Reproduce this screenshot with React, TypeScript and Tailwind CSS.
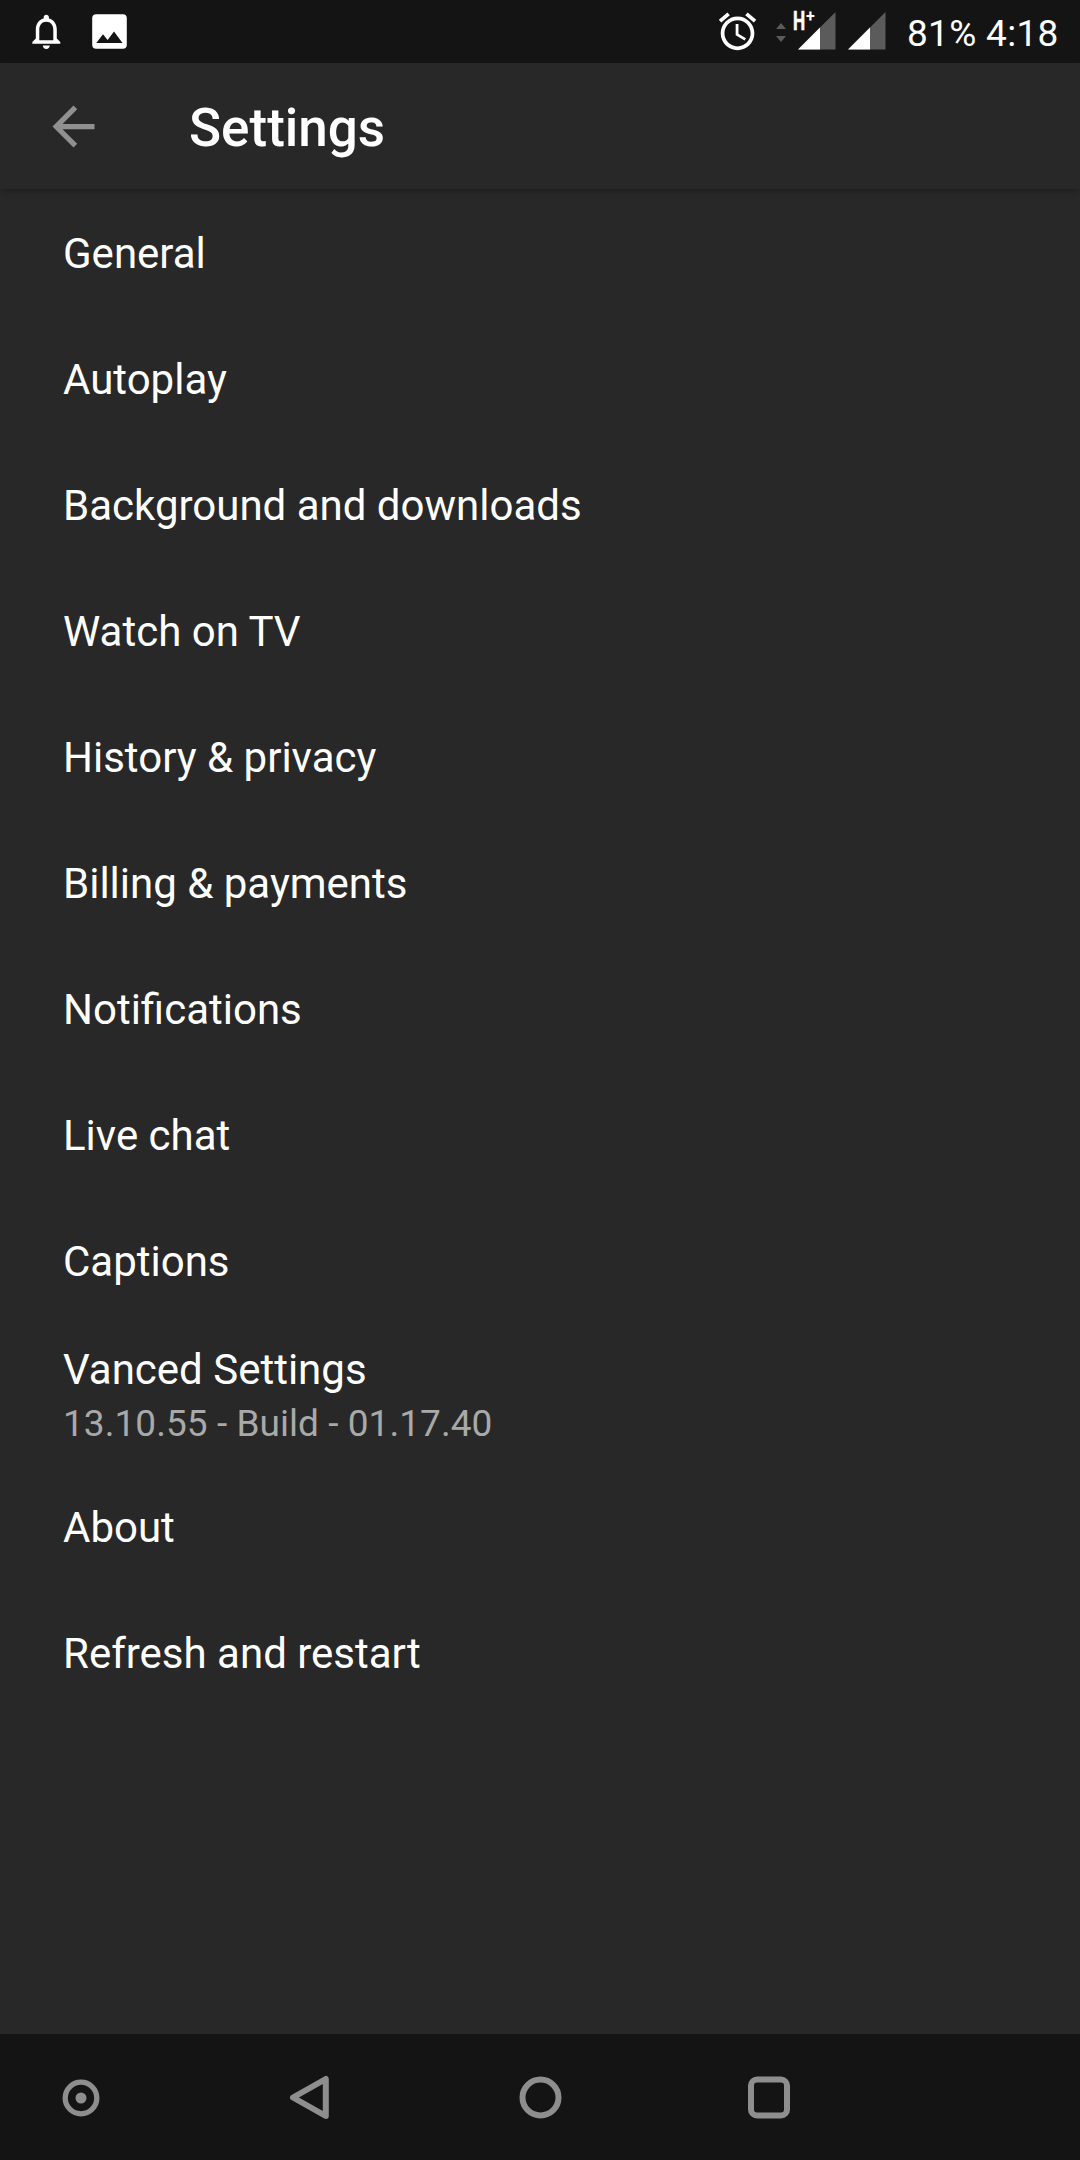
type SettingItem = {
    title: string;
    summary?: string;
};

const settings: SettingItem[] = [
    { title: "General" },
    { title: "Autoplay" },
    { title: "Background and downloads" },
    { title: "Watch on TV" },
    { title: "History & privacy" },
    { title: "Billing & payments" },
    { title: "Notifications" },
    { title: "Live chat" },
    { title: "Captions" },
    { title: "Vanced Settings", summary: "13.10.55 - Build - 01.17.40" },
    { title: "About" },
    { title: "Refresh and restart" },
];

const StatusBar = () => {
    return (
        <div className="flex h-[63px] shrink-0 items-center justify-between bg-[#141414] pl-[25px] pr-5 text-white">
            {/* NOTIFICATIONS  */}
            <div className="flex h-[63px]">
                <svg width="42" height="63" viewBox="0 0 42 63" fill="currentColor">
                    <path transform="translate(0.3 10.4) scale(1.75)" d="M12 22c1.1 0 2-.9 2-2h-4c0 1.1.9 2 2 2zm6-6v-5c0-3.07-1.63-5.64-4.5-6.32V4c0-.83-.67-1.5-1.5-1.5s-1.5.67-1.5 1.5v.68C7.64 5.36 6 7.92 6 11v5l-2 2v1h16v-1l-2-2zm-2 1H8v-6c0-2.48 1.51-4.5 4-4.5s4 2.02 4 4.5v6z" />
                </svg>
                <svg className="ml-[25px]" width="35" height="63" viewBox="0 0 35 63">
                    <rect x="0.2" y="14.2" width="34.6" height="34.6" rx="4" fill="currentColor" />
                    <path d="M4.3 43l6.7-8.7 4.6 5.6 6.4-8.4 8.5 11.5z" fill="#141414" />
                </svg>
            </div>

            {/* ALARM, NETWORK, BATTERY AND CLOCK  */}
            <div className="flex h-[63px] items-center">
                <svg width="45" height="63" viewBox="0 0 45 63" fill="currentColor">
                    <path transform="translate(0.1 9) scale(1.87)" d="M22 5.72l-4.6-3.86-1.29 1.53 4.6 3.86L22 5.72zM7.88 3.39L6.6 1.86 2 5.71l1.29 1.53 4.59-3.85zM12.5 8H11v6l4.75 2.85.75-1.23-4-2.37V8zM12 4c-4.97 0-9 4.03-9 9s4.02 9 9 9c4.97 0 9-4.03 9-9s-4.03-9-9-9zm0 16c-3.87 0-7-3.13-7-7s3.13-7 7-7 7 3.13 7 7-3.13 7-7 7z" />
                </svg>
                <svg className="ml-4" width="60" height="63" viewBox="0 0 60 63" fill="currentColor">
                    <path d="M0 29l5-6 5 6zM0 36h10l-5 6z" fill="#5b5b5b" />
                    <path d="M22 49.5L59.5 12v37.5z" fill="#5b5b5b" />
                    <path d="M22 49.5L44 27.5v22z" />
                    <text transform="translate(17 30) scale(0.69 1)" fontSize="25" fontWeight="700" stroke="currentColor" strokeWidth="0.5">H</text>
                    <text x="30" y="22.3" fontSize="16" fontWeight="700">+</text>
                </svg>
                <svg className="ml-3" width="38" height="63" viewBox="0 0 38 63" fill="currentColor">
                    <path d="M0 49.5L37.5 12v37.5z" fill="#5b5b5b" />
                    <path d="M0 49.5L22 27.5v22z" />
                </svg>
                <div className="ml-[21px] mt-1 w-[153px] whitespace-nowrap text-[37px] leading-[43px] tracking-[0.3px]">81% 4:18</div>
            </div>
        </div>
    );
};

const Toolbar = () => {
    return (
        <div className="flex h-[126px] shrink-0 items-center bg-[#282828] pl-[42px] shadow-[0_4px_6px_-2px_rgba(0,0,0,0.3)]">
            <svg width="63" height="63" viewBox="0 0 24 24" fill="#909090">
                <path d="M20 11H7.83l5.59-5.59L12 4l-8 8 8 8 1.41-1.41L7.83 13H20v-2z" />
            </svg>
            <h1 className="ml-[84px] mt-1 text-[53px] font-medium leading-[62px] text-white">Settings</h1>
        </div>
    );
};

const NavigationBar = () => {
    return (
        <div className="flex h-[126px] shrink-0 items-center gap-[166.5px] bg-[#141414] pl-[49.5px]">
            <svg width="63" height="63" viewBox="0 0 63 63" fill="none" stroke="#8e8e8e">
                <circle cx="31" cy="32" r="15.8" strokeWidth="5.3" />
                <circle cx="31" cy="32" r="5.5" fill="#8e8e8e" stroke="none" />
            </svg>
            <svg width="63" height="63" viewBox="0 0 63 63" fill="none" stroke="#8e8e8e" strokeWidth="6" strokeLinejoin="round">
                <path d="M14 31.5L46.8 13v37z" />
            </svg>
            <svg width="63" height="63" viewBox="0 0 63 63" fill="none" stroke="#8e8e8e" strokeWidth="6">
                <circle cx="31.5" cy="31.5" r="18" />
            </svg>
            <svg width="63" height="63" viewBox="0 0 63 63" fill="none" stroke="#8e8e8e" strokeWidth="6">
                <rect x="13" y="13.5" width="36" height="36" rx="6" />
            </svg>
        </div>
    );
};

const App = () => {
    return (
        <div className="flex h-[2160px] w-[1080px] flex-col overflow-hidden bg-[#282828] font-['Roboto',sans-serif]">
            <StatusBar />
            <Toolbar />

            {/* SETTINGS LIST  */}
            <ul className="flex-1">
                {settings.map((item) => (
                    <li key={item.title} className={item.summary ? "h-[140px] px-[63px] pt-[22px]" : "h-[126px] px-[63px] pt-10"}>
                        <div className="text-[42px] leading-[49px] text-white">{item.title}</div>
                        {item.summary && (
                            <div className="mt-2 text-[37px] leading-[43px] tracking-[0.05px] text-[#a9a9a9]">{item.summary}</div>
                        )}
                    </li>
                ))}
            </ul>

            <NavigationBar />
        </div>
    );
};

export default App;
